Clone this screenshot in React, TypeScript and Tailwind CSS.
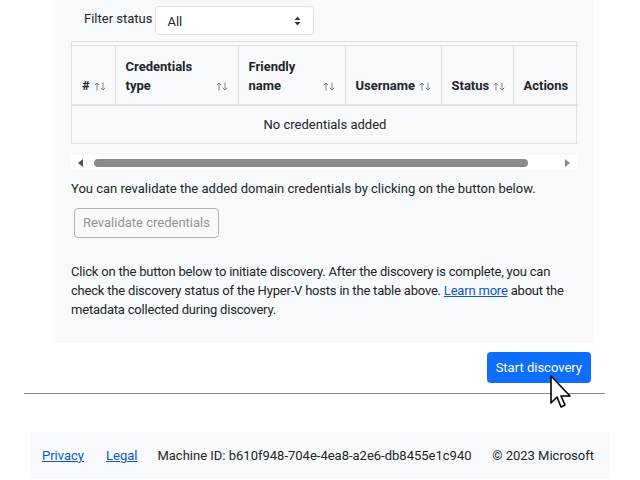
import React from 'react';

const COLS = [
  { label: '#', w: 'w-[43px]', sort: true },
  { label: 'Credentials type', w: 'w-[123px]', sort: true },
  { label: 'Friendly name', w: 'w-[107px]', sort: true },
  { label: 'Username', w: 'w-[96px]', sort: true },
  { label: 'Status', w: 'w-[72px]', sort: true },
  { label: 'Actions', w: 'w-[65px]', sort: false },
];

function SortIcon() {
  return (
    <svg className="ml-auto mb-[4px] shrink-0" width="12" height="9" viewBox="0 0 12 9">
      <path d="M3 8.5 V1 M0.8 3.2 L3 1 L5.2 3.2" fill="none" stroke="#7d8590" strokeWidth="1" />
      <path d="M9 0.5 V8 M6.8 5.8 L9 8 L11.2 5.8" fill="none" stroke="#7d8590" strokeWidth="1" />
    </svg>
  );
}

function Cursor() {
  return (
    <svg className="absolute left-[550px] top-[375px]" width="24" height="38" viewBox="0 0 24 38">
      <path
        d="M1 1 L1 28 L7 22 L11 32 L15 30 L11 21 L20 21 Z"
        fill="#fff"
        stroke="#000"
        strokeWidth="1.6"
        strokeLinejoin="round"
      />
    </svg>
  );
}

export default function App() {
  return (
    <div className="relative w-[640px] h-[480px] overflow-hidden bg-white text-[#212529] font-['Roboto',sans-serif] text-[13px]">
      {/* Discovery panel */}
      <div className="ml-[55px] w-[539px] h-[343px] bg-[#f8f9fa] px-4 pt-[6px]">
        <div className="flex items-center pl-[13px]">
          <span className="mr-[3px] -mt-[3px]">Filter status</span>
          <div className="flex items-center w-[159px] h-[29px] bg-white border border-[#dee2e6] rounded-[4px] pl-[11px] pr-[12px]">
            <span className="pt-[2px]">All</span>
            <svg className="ml-auto" width="7" height="10" viewBox="0 0 7 10">
              <path d="M3.5 0.5 L6.5 4 L0.5 4 Z M3.5 9.5 L6.5 6 L0.5 6 Z" fill="#343a40" />
            </svg>
          </div>
        </div>

        <div className="mt-[6px] w-[506px] border-x border-t border-[#dee2e6] pt-[3px]">
          <table className="w-full table-fixed border-collapse">
            <thead>
              <tr className="h-[59px] border-t border-b-2 border-[#dee2e6]">
                {COLS.map((c, i) => (
                  <th
                    key={c.label}
                    className={`${c.w} align-bottom text-left font-bold pb-[9px] px-[10px] leading-[19px] ${i > 0 ? 'border-l border-[#dee2e6]' : ''}`}
                  >
                    <div className="flex items-end gap-1">
                      <span>{c.label}</span>
                      {c.sort && <SortIcon />}
                    </div>
                  </th>
                ))}
              </tr>
            </thead>
            <tbody>
              <tr className="h-[39px] border-b border-[#dee2e6]">
                <td colSpan={6} className="text-center">No credentials added</td>
              </tr>
            </tbody>
          </table>
        </div>

        {/* horizontal scrollbar */}
        <div className="mt-[11px] w-[506px] h-[15px] bg-white flex items-center px-[7px]">
          <svg width="6" height="8" viewBox="0 0 6 8"><path d="M5 0 L5 8 L0 4 Z" fill="#505050" /></svg>
          <div className="ml-[10px] w-[434px] h-[8px] rounded-full bg-[#8a8a8a]" />
          <svg className="ml-auto" width="6" height="8" viewBox="0 0 6 8"><path d="M1 0 L1 8 L6 4 Z" fill="#8a8a8a" /></svg>
        </div>

        <p className="mt-[9px] leading-[20px]">You can revalidate the added domain credentials by clicking on the button below.</p>
        <button className="mt-[9px] ml-[3px] h-[30px] px-[8px] border border-[#adb5bd] rounded-[4px] text-[#8f959b] bg-transparent">
          Revalidate credentials
        </button>

        <p className="mt-[24px] leading-[19px] tracking-[-0.2px]">
          Click on the button below to initiate discovery. After the discovery is complete, you can check the discovery
          status of the Hyper-V hosts in the table above.{' '}
          <a className="text-[#0a58ca] underline">Learn more</a> about the metadata collected during discovery.
        </p>
      </div>

      {/* Action row */}
      <div className="flex justify-end w-[591px] mt-[9px]">
        <button className="h-[31px] px-[9px] rounded-[4px] bg-[#0d6efd] text-white">Start discovery</button>
      </div>

      <div className="ml-[24px] w-[581px] mt-[10px] border-t border-[#8a8a8a]" />

      {/* Footer */}
      <footer className="ml-[30px] w-[580px] h-[47px] mt-[38px] bg-[#f8f9fa] flex items-center whitespace-nowrap pl-[12px] pr-[16px]">
        <a className="text-[#0a58ca] underline">Privacy</a>
        <a className="ml-[22px] text-[#0a58ca] underline">Legal</a>
        <span className="ml-[20px]">Machine ID: b610f948-704e-4ea8-a2e6-db8455e1c940</span>
        <span className="ml-auto">© 2023 Microsoft</span>
      </footer>

      <Cursor />
    </div>
  );
}
